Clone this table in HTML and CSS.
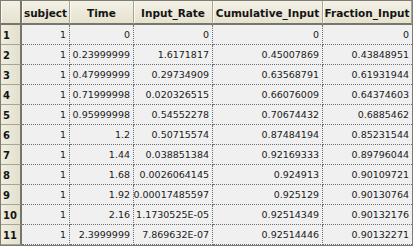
FILE: index.html
```html
<!DOCTYPE html>
<html>
<head>
<meta charset="utf-8">
<link rel="stylesheet" href="styles.css">
</head>
<body>
<div class="sheet">
  <div class="hd corner"></div>
  <div class="hd">subject</div>
  <div class="hd">Time</div>
  <div class="hd">Input_Rate</div>
  <div class="hd">Cumulative_Input</div>
  <div class="hd">Fraction_Input</div>

  <div class="rh">1</div><div class="c">1</div><div class="c">0</div><div class="c">0</div><div class="c">0</div><div class="c">0</div>
  <div class="rh">2</div><div class="c">1</div><div class="c">0.23999999</div><div class="c">1.6171817</div><div class="c">0.45007869</div><div class="c">0.43848951</div>
  <div class="rh">3</div><div class="c">1</div><div class="c">0.47999999</div><div class="c">0.29734909</div><div class="c">0.63568791</div><div class="c">0.61931944</div>
  <div class="rh">4</div><div class="c">1</div><div class="c">0.71999998</div><div class="c">0.020326515</div><div class="c">0.66076009</div><div class="c">0.64374603</div>
  <div class="rh">5</div><div class="c">1</div><div class="c">0.95999998</div><div class="c">0.54552278</div><div class="c">0.70674432</div><div class="c">0.6885462</div>
  <div class="rh">6</div><div class="c">1</div><div class="c">1.2</div><div class="c">0.50715574</div><div class="c">0.87484194</div><div class="c">0.85231544</div>
  <div class="rh">7</div><div class="c">1</div><div class="c">1.44</div><div class="c">0.038851384</div><div class="c">0.92169333</div><div class="c">0.89796044</div>
  <div class="rh">8</div><div class="c">1</div><div class="c">1.68</div><div class="c">0.0026064145</div><div class="c">0.924913</div><div class="c">0.90109721</div>
  <div class="rh">9</div><div class="c">1</div><div class="c">1.92</div><div class="c">0.00017485597</div><div class="c">0.925129</div><div class="c">0.90130764</div>
  <div class="rh">10</div><div class="c">1</div><div class="c">2.16</div><div class="c">1.1730525E-05</div><div class="c">0.92514349</div><div class="c">0.90132176</div>
  <div class="rh">11</div><div class="c">1</div><div class="c">2.3999999</div><div class="c">7.869632E-07</div><div class="c">0.92514446</div><div class="c">0.90132271</div>
</div>
</body>
</html>
```
FILE: styles.css
```css
html, body {
  margin: 0;
  padding: 0;
  background: #ffffff;
}
.sheet {
  width: 413px;
  height: 246px;
  box-sizing: border-box;
  border: 1px solid #7f7d73;
  display: grid;
  grid-template-columns: 21px 48px 64px 79px 110px 89px;
  grid-template-rows: 24px repeat(11, 20px);
  background: #f0f0f0;
  font-family: "DejaVu Sans", Tahoma, sans-serif;
  font-size: 9.5px;
  color: #000000;
  overflow: hidden;
}
.hd {
  box-sizing: border-box;
  background: linear-gradient(#f3f1e6, #e6e2cf);
  border-right: 1px solid #a8a493;
  border-bottom: 2px solid #78766a;
  box-shadow: inset 1px 0 0 #fbfaf4;
  font-weight: bold;
  font-size: 10.5px;
  color: #141414;
  display: flex;
  align-items: center;
  justify-content: center;
  padding-top: 1px;
  white-space: nowrap;
}
.hd.corner {
  border-right: 2px solid #78766a;
}
.rh {
  box-sizing: border-box;
  background: linear-gradient(90deg, #efede0, #e4e0cc);
  border-right: 2px solid #78766a;
  border-bottom: 1px solid #a8a493;
  font-weight: bold;
  font-size: 10px;
  color: #141414;
  display: flex;
  align-items: center;
  padding-left: 2px;
  padding-top: 2px;
}
.c {
  box-sizing: border-box;
  border-right: 1px dotted #6e6e6e;
  border-bottom: 1px dotted #6e6e6e;
  display: flex;
  align-items: center;
  justify-content: flex-end;
  padding-right: 3px;
  white-space: nowrap;
  color: #1a1a1a;
}
.c:nth-child(6n) {
  border-right: none;
}
```
